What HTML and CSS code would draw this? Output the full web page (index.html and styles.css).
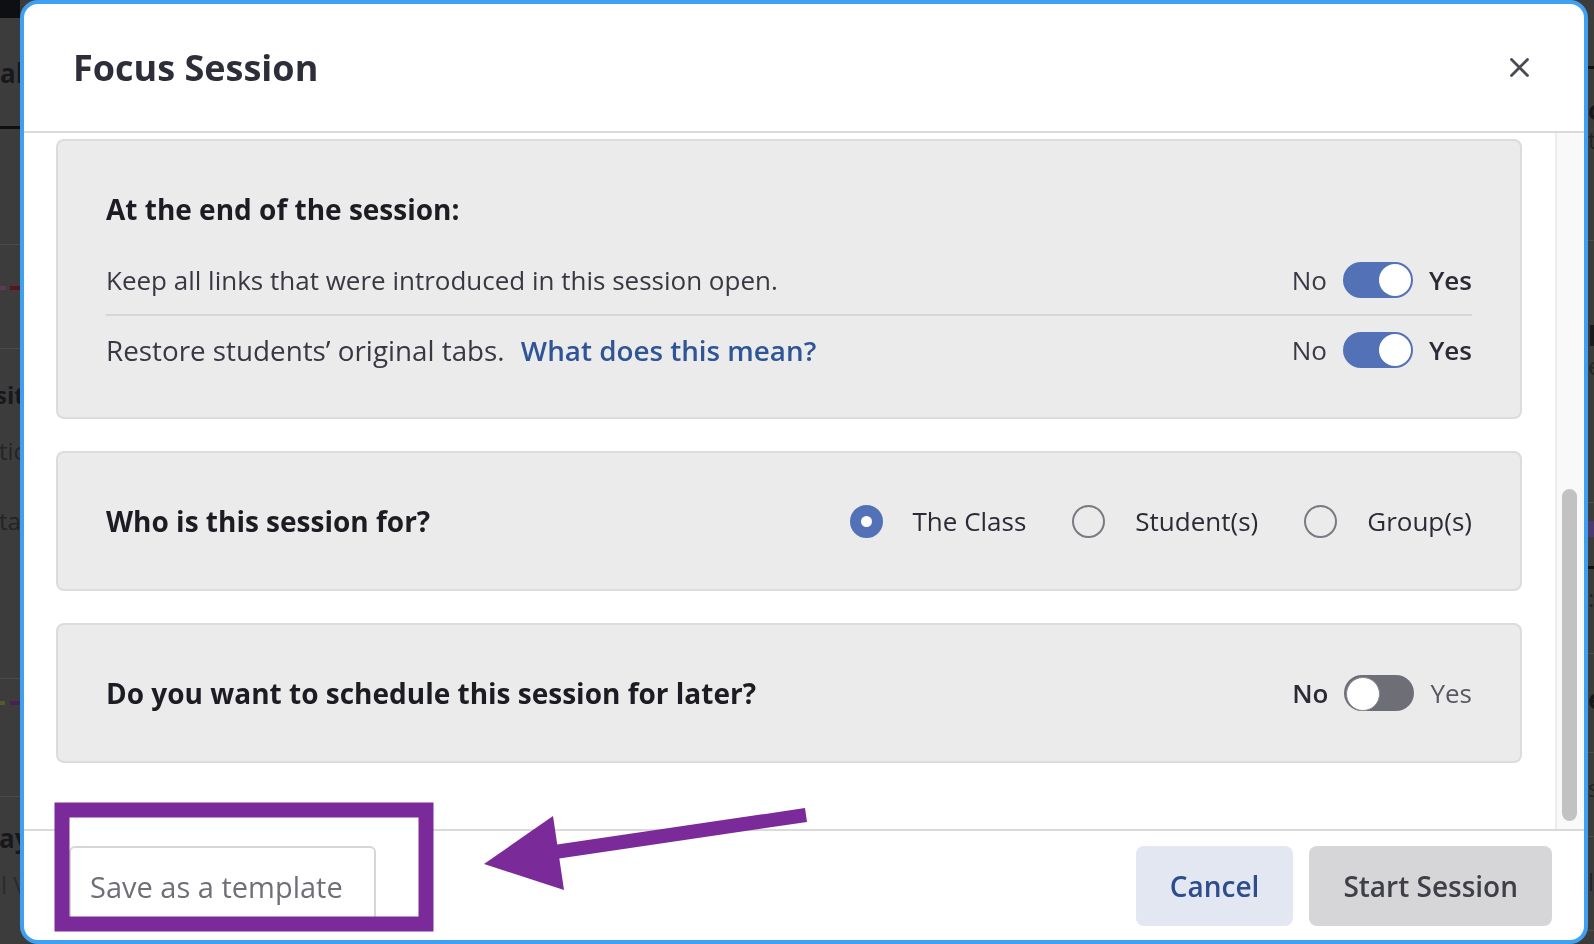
FILE: index.html
```html
<!DOCTYPE html>
<html lang="en">
<head>
<meta charset="utf-8">
<title>Focus Session</title>
<link rel="stylesheet" href="styles.css">
</head>
<body>
<div class="page">
  <div class="bg-left">
    <div class="bl-top"></div>
    <div class="bl-head"><span class="frag-bold frag-tab">Tab</span></div>
    <div class="bl-sec bl-sec1"></div>
    <div class="bl-sec bl-sec2"><span class="dash dash-purple"></span><span class="dash dash-red"></span></div>
    <div class="bl-sec bl-sec3">
      <span class="frag-bold frag-sit">sit</span>
      <span class="frag frag-tic">tic</span>
      <span class="frag frag-tar">tar</span>
    </div>
    <div class="bl-sec bl-sec4"><span class="dash dash-olive"></span><span class="dash dash-purple2"></span></div>
    <div class="bl-last">
      <span class="frag-bold frag-ay">ay</span>
      <span class="frag frag-lv">l V</span>
    </div>
  </div>
  <div class="bg-right">
    <div class="br-a"></div>
    <div class="br-line br-dark"></div>
    <div class="br-sec br-s1"><span class="frag-bold">o</span><span class="frag">t</span></div>
    <div class="br-sec br-s2"><span class="frag-bold">l</span><span class="frag">e</span></div>
    <div class="br-sec br-s3"><span class="badge"></span></div>
    <div class="br-sec br-s4"><span class="frag">:</span></div>
    <div class="br-sec br-s5"><span class="frag-bold">e</span></div>
    <div class="br-sec br-s6"><span class="frag">s</span></div>
    <div class="br-sec br-s7"><span class="frag">l</span></div>
  </div>
</div>

<div class="modal" role="dialog" aria-labelledby="modal-title">
  <header class="modal-header">
    <h2 class="modal-title" id="modal-title">Focus Session</h2>
    <button class="close-btn" aria-label="Close">
      <svg width="19" height="19" viewBox="0 0 19 19"><path d="M1.5 1.5 L17.5 17.5 M17.5 1.5 L1.5 17.5" stroke="#4a4a55" stroke-width="2.8" stroke-linecap="round" fill="none"/></svg>
    </button>
  </header>

  <div class="modal-body">
    <div class="body-content">
      <section class="card card-end">
        <h3 class="card-title">At the end of the session:</h3>
        <div class="opt-row">
          <span class="opt-text">Keep all links that were introduced in this session open.</span>
          <div class="yn">
            <span class="yn-label">No</span>
            <span class="toggle on"></span>
            <span class="yn-label active">Yes</span>
          </div>
        </div>
        <div class="opt-row">
          <span class="opt-text opt-text-lg">Restore students’ original tabs. <a class="help" href="#">What does this mean?</a></span>
          <div class="yn">
            <span class="yn-label">No</span>
            <span class="toggle on"></span>
            <span class="yn-label active">Yes</span>
          </div>
        </div>
      </section>

      <section class="card card-row">
        <h3 class="card-title">Who is this session for?</h3>
        <div class="radios">
          <label class="radio"><span class="radio-dot checked"></span>The Class</label>
          <label class="radio"><span class="radio-dot"></span>Student(s)</label>
          <label class="radio"><span class="radio-dot"></span>Group(s)</label>
        </div>
      </section>

      <section class="card card-row">
        <h3 class="card-title">Do you want to schedule this session for later?</h3>
        <div class="yn">
          <span class="yn-label active">No</span>
          <span class="toggle off"></span>
          <span class="yn-label muted">Yes</span>
        </div>
      </section>
    </div>
    <div class="scroll-track"><div class="scroll-thumb"></div></div>
  </div>

  <footer class="modal-footer">
    <button class="btn btn-save">Save as a template</button>
    <button class="btn btn-cancel">Cancel</button>
    <button class="btn btn-start">Start Session</button>
  </footer>
</div>

<svg class="annotation" width="1594" height="944" viewBox="0 0 1594 944" aria-hidden="true">
  <rect x="69" y="817" width="350" height="28" fill="#ffffff"/>
  <rect x="62" y="810" width="364" height="114" fill="none" stroke="#7b2a99" stroke-width="15"/>
  <line x1="806" y1="815" x2="548" y2="853" stroke="#7b2a99" stroke-width="14"/>
  <polygon points="553,816 484,864 564,890" fill="#7b2a99"/>
</svg>
</body>
</html>
```

FILE: styles.css
```css
* { box-sizing: border-box; }

body {
  margin: 0;
  width: 1594px;
  height: 944px;
  overflow: hidden;
  background: #3c3c3c;
  font-family: "Open Sans", "Noto Sans", sans-serif;
}

/* ---------- background page (dimmed) ---------- */
.page {
  display: flex;
  justify-content: space-between;
  height: 944px;
}

.bg-left {
  width: 20px;
  overflow: hidden;
  display: flex;
  flex-direction: column;
  white-space: nowrap;
}

.bl-top { height: 18px; background: #0e0f13; flex: none; }

.bl-head {
  height: 111px;
  flex: none;
  padding-top: 40px;
  border-bottom: 3px solid #101014;
}

.frag-bold { font-weight: 700; color: #18181c; font-size: 26px; line-height: 30px; display: block; }
.frag { color: #242426; font-size: 24px; line-height: 30px; display: block; }

.frag-tab { margin-left: -15px; }

.bl-sec { flex: none; border-bottom: 1px solid #4a4a4a; }
.bl-sec1 { height: 116px; }
.bl-sec2 { height: 104px; padding-top: 41px; display: flex; gap: 4px; }
.dash { display: block; height: 4px; }
.dash-purple { width: 6px; background: #5a3a5c; }
.dash-red { width: 10px; background: #5a1420; }
.bl-sec3 { height: 330px; padding-top: 31px; }
.frag-sit { margin-left: -5px; font-size: 24px; }
.frag-tic { margin-left: -1px; margin-top: 26px; }
.frag-tar { margin-left: -1px; margin-top: 40px; }
.bl-sec4 { height: 118px; padding-top: 22px; display: flex; gap: 5px; }
.dash-olive { width: 5px; background: #58582e; }
.dash-purple2 { width: 10px; background: #4a1f55; }
.bl-last { flex: 1; padding-top: 26px; }
.frag-ay { margin-left: -1px; }
.frag-lv { margin-left: 1px; margin-top: 17px; color: #2a2a2c; }

.bg-right {
  width: 10px;
  overflow: hidden;
  display: flex;
  flex-direction: column;
  white-space: nowrap;
  padding-left: 4px;
}
.br-a { height: 66px; flex: none; }
.br-line { height: 3px; flex: none; }
.br-dark { background: #111; }
.br-sec { flex: none; border-bottom: 1px solid #4c4c4c; }
.br-s1 { height: 172px; padding-top: 26px; }
.br-s2 { height: 262px; padding-top: 80px; }
.br-s3 { height: 66px; padding-top: 18px; border-bottom: 3px solid #111; }
.badge { display: block; width: 8px; height: 16px; background: #4b3a6e; }
.br-s4 { height: 85px; padding-top: 14px; }
.br-s5 { height: 99px; padding-top: 30px; }
.br-s6 { height: 84px; padding-top: 20px; }
.br-s7 { height: 94px; padding-top: 30px; }

/* ---------- modal ---------- */
.modal {
  position: fixed;
  left: 20px;
  top: 0;
  width: 1568px;
  height: 944px;
  background: #fff;
  border: 4px solid #3f9ff1;
  border-radius: 18px;
  display: flex;
  flex-direction: column;
  overflow: hidden;
}

.modal-header {
  height: 129px;
  flex: none;
  display: flex;
  align-items: center;
  justify-content: space-between;
  padding: 0 55px 0 49px;
  border-bottom: 2px solid #dadada;
}

.modal-title {
  margin: 0;
  font-size: 36px;
  font-weight: 700;
  color: #2e2e3a;
  line-height: 44px;
}

.close-btn {
  width: 19px;
  height: 19px;
  padding: 0;
  border: 0;
  background: none;
  display: flex;
}

.modal-body {
  flex: none;
  height: 696px;
  display: flex;
}

.body-content {
  flex: 1;
  min-width: 0;
  overflow: hidden;
  padding: 6px 33px 0 32px;
  display: flex;
  flex-direction: column;
  gap: 32px;
}

.scroll-track {
  width: 29px;
  flex: none;
  border-left: 2px solid #ececec;
  background: #f9f9f9;
  padding: 356px 0 0 5px;
}

.scroll-thumb {
  width: 15px;
  height: 332px;
  border-radius: 8px;
  background: #c2c2c2;
}

/* cards */
.card {
  flex: none;
  background: #ebebeb;
  border: 2px solid #dcdcdc;
  border-radius: 8px;
  padding: 0 48px;
}

.card-end { padding: 51px 48px 33px; }

.card-row {
  height: 140px;
  display: flex;
  align-items: center;
  justify-content: space-between;
}

.card-title {
  margin: 0;
  font-size: 28px;
  line-height: 34px;
  font-weight: 700;
  color: #1c1c22;
}

.card-end .card-title { margin-bottom: 20px; }

.opt-row {
  display: flex;
  align-items: center;
  justify-content: space-between;
  padding: 16px 0;
}

.opt-row + .opt-row { border-top: 2px solid #d6d6d6; }

.opt-text {
  font-size: 26px;
  line-height: 36px;
  color: #383842;
}

.opt-text-lg { font-size: 27.8px; }

.help {
  margin-left: 9px;
  color: #2f5597;
  font-weight: 600;
  text-decoration: none;
}

.yn {
  display: flex;
  align-items: center;
  gap: 16px;
}

.yn-label {
  font-size: 26px;
  line-height: 36px;
  color: #3a3a44;
}

.yn-label.active { font-weight: 600; color: #2b2b36; }
.yn-label.muted { color: #585862; }

.toggle {
  position: relative;
  width: 70px;
  height: 36px;
  border-radius: 18px;
  background: #5271b6;
  flex: none;
}

.toggle::after {
  content: "";
  position: absolute;
  top: 2px;
  left: 36px;
  width: 32px;
  height: 32px;
  border-radius: 50%;
  background: #fff;
}

.toggle.off { background: #6e6e77; }
.toggle.off::after { left: 2px; border: 1px solid #8a8a92; }

/* radios */
.radios {
  display: flex;
  align-items: center;
  gap: 46px;
}

.radio {
  display: flex;
  align-items: center;
  gap: 30px;
  font-size: 26px;
  line-height: 36px;
  color: #2b2b36;
}

.radio-dot {
  width: 33px;
  height: 33px;
  border-radius: 50%;
  border: 2px solid #7a7a82;
  display: flex;
  align-items: center;
  justify-content: center;
  flex: none;
}

.radio-dot.checked {
  background: #5271b6;
  border-color: #5271b6;
}

.radio-dot.checked::after {
  content: "";
  width: 11px;
  height: 11px;
  border-radius: 50%;
  background: #fff;
}

/* footer */
.modal-footer {
  flex: 1;
  border-top: 2px solid #dadada;
  display: flex;
  align-items: flex-start;
  gap: 16px;
  padding: 15px 32px 0 45px;
}

.btn {
  height: 80px;
  border-radius: 8px;
  border: 0;
  font-family: inherit;
  font-size: 28px;
  font-weight: 600;
  padding: 0 34px;
}

.btn-save {
  width: 307px;
  margin-right: auto;
  text-align: left;
  padding: 0 19px;
  background: #fff;
  border: 2px solid #d6d6d6;
  border-radius: 6px;
  color: #6f6f78;
  font-size: 29px;
  font-weight: 400;
}

.btn-cancel { background: #e3e7f2; color: #2d4d8c; }
.btn-start { background: #d6d6d9; color: #3f3f48; }

/* annotation overlay */
.annotation {
  position: fixed;
  left: 0;
  top: 0;
  pointer-events: none;
}
```
